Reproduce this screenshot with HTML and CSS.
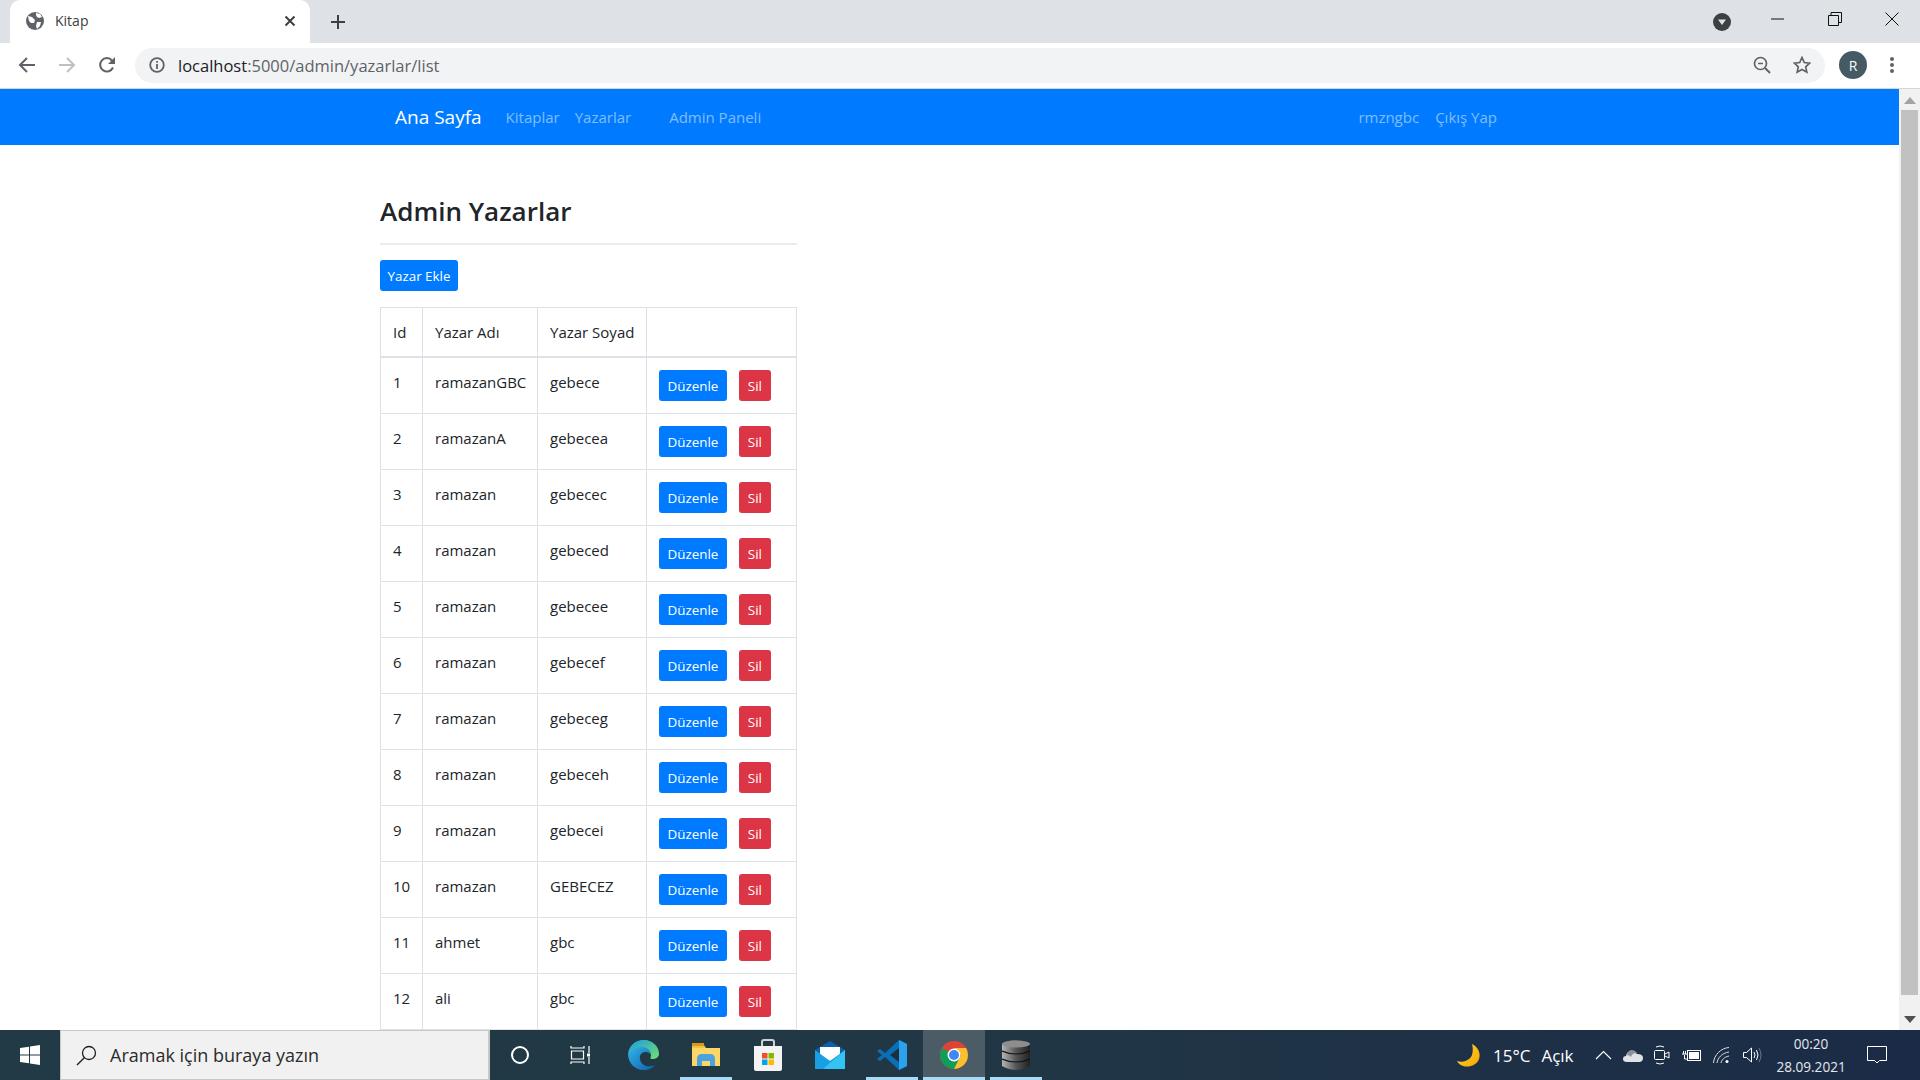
FILE: index.html
```html
<!DOCTYPE html>
<html lang="en">
<head>
  <meta charset="UTF-8">
  <title>Kitap</title>
  <link rel="stylesheet" href="styles.css">
</head>
<body>
  <div class="tabstrip">
    <div class="tab">
      <svg class="tab-favicon" width="18" height="18" viewBox="0 0 18 18"><circle cx="9" cy="9" r="9" fill="#5f6368"/><path d="M2 4l4 1 3 3-1 3-3 0-2-2zM10 1l4 1 2 3-3 1-2-1-1-2zM11 10l4 0-1 4-3 3-1-3z" fill="#fff"/></svg>
      <span class="tab-title">Kitap</span>
      <svg width="12" height="12" viewBox="0 0 12 12"><path d="M1.5 1.5l9 9M10.5 1.5l-9 9" stroke="#3c4043" stroke-width="2"/></svg>
    </div>
    <svg class="new-tab" width="16" height="16" viewBox="0 0 16 16"><path d="M8 1v14M1 8h14" stroke="#3c4043" stroke-width="2"/></svg>
    <svg class="tab-search" width="18" height="18" viewBox="0 0 18 18"><circle cx="9" cy="9" r="9" fill="#3c4043"/><path d="M5 6.5h8L9 12z" fill="#dee1e6"/></svg>
    <div class="window-controls">
      <svg width="14" height="14" viewBox="0 0 14 14"><path d="M0 7h13" stroke="#111" stroke-width="1"/></svg>
      <svg width="14" height="14" viewBox="0 0 14 14"><path d="M.5 3.5h10v10H.5zM3 3.5V.5h10.500v10h-3" fill="none" stroke="#111" stroke-width="1"/></svg>
      <svg width="14" height="14" viewBox="0 0 14 14"><path d="M.5.5l13 13M13.500.5l-13 13" stroke="#111" stroke-width="1"/></svg>
    </div>
  </div>

  <div class="toolbar">
    <svg class="tool" width="18" height="18" viewBox="0 0 18 18"><path d="M17 9H2M9 2L2 9l7 7" fill="none" stroke="#5f6368" stroke-width="2"/></svg>
    <svg class="tool" width="18" height="18" viewBox="0 0 18 18"><path d="M1 9h15M9 2l7 7-7 7" fill="none" stroke="#bdc1c6" stroke-width="2"/></svg>
    <svg class="tool tool-reload" width="18" height="18" viewBox="0 0 18 18"><path d="M15 11.500A6.700 6.700 0 1 1 14 4.500" fill="none" stroke="#5f6368" stroke-width="2"/><path d="M17 1v7h-7z" fill="#5f6368"/></svg>
    <div class="omnibox">
      <svg width="16" height="16" viewBox="0 0 16 16"><circle cx="8" cy="8" r="6.800" fill="none" stroke="#5f6368" stroke-width="1.800"/><path d="M8 7v5M8 4v1.800" stroke="#5f6368" stroke-width="1.800"/></svg>
      <div class="url"><span class="url-host">localhost</span>:5000/admin/yazarlar/list</div>
      <svg width="18" height="18" viewBox="0 0 18 18"><circle cx="7.500" cy="7.500" r="6" fill="none" stroke="#5f6368" stroke-width="1.700"/><path d="M12 12l5 5" stroke="#5f6368" stroke-width="2"/><path d="M5 7.500h5" stroke="#5f6368" stroke-width="1.500"/></svg>
      <svg class="star" width="18" height="18" viewBox="0 0 18 18"><path d="M9 1.500l2.300 5 5.400.6-4 3.700 1.100 5.400L9 13.500l-4.800 2.700 1.100-5.400-4-3.700 5.400-.6z" fill="none" stroke="#5f6368" stroke-width="1.700"/></svg>
    </div>
    <div class="avatar">R</div>
    <svg class="kebab" width="6" height="18" viewBox="0 0 6 18"><circle cx="3" cy="3" r="2" fill="#5f6368"/><circle cx="3" cy="9" r="2" fill="#5f6368"/><circle cx="3" cy="15" r="2" fill="#5f6368"/></svg>
  </div>

  <div class="viewport">
    <div class="page">
      <nav class="navbar">
        <a class="brand">Ana Sayfa</a>
        <a class="nav-link nav-kitaplar">Kitaplar</a>
        <a class="nav-link nav-yazarlar">Yazarlar</a>
        <a class="nav-link nav-admin">Admin Paneli</a>
        <a class="nav-link nav-user">rmzngbc</a>
        <a class="nav-link">Çıkış Yap</a>
      </nav>
      <main class="content">
        <h1>Admin Yazarlar</h1>
        <hr>
        <a class="btn btn-primary btn-add">Yazar Ekle</a>
        <table>
          <thead>
            <tr><th class="col-id">Id</th><th class="col-name">Yazar Adı</th><th class="col-surname">Yazar Soyad</th><th></th></tr>
          </thead>
          <tbody>
            <tr><td>1</td><td>ramazanGBC</td><td>gebece</td><td><a class="btn btn-primary">Düzenle</a><a class="btn btn-danger">Sil</a></td></tr>
            <tr><td>2</td><td>ramazanA</td><td>gebecea</td><td><a class="btn btn-primary">Düzenle</a><a class="btn btn-danger">Sil</a></td></tr>
            <tr><td>3</td><td>ramazan</td><td>gebecec</td><td><a class="btn btn-primary">Düzenle</a><a class="btn btn-danger">Sil</a></td></tr>
            <tr><td>4</td><td>ramazan</td><td>gebeced</td><td><a class="btn btn-primary">Düzenle</a><a class="btn btn-danger">Sil</a></td></tr>
            <tr><td>5</td><td>ramazan</td><td>gebecee</td><td><a class="btn btn-primary">Düzenle</a><a class="btn btn-danger">Sil</a></td></tr>
            <tr><td>6</td><td>ramazan</td><td>gebecef</td><td><a class="btn btn-primary">Düzenle</a><a class="btn btn-danger">Sil</a></td></tr>
            <tr><td>7</td><td>ramazan</td><td>gebeceg</td><td><a class="btn btn-primary">Düzenle</a><a class="btn btn-danger">Sil</a></td></tr>
            <tr><td>8</td><td>ramazan</td><td>gebeceh</td><td><a class="btn btn-primary">Düzenle</a><a class="btn btn-danger">Sil</a></td></tr>
            <tr><td>9</td><td>ramazan</td><td>gebecei</td><td><a class="btn btn-primary">Düzenle</a><a class="btn btn-danger">Sil</a></td></tr>
            <tr><td>10</td><td>ramazan</td><td>GEBECEZ</td><td><a class="btn btn-primary">Düzenle</a><a class="btn btn-danger">Sil</a></td></tr>
            <tr><td>11</td><td>ahmet</td><td>gbc</td><td><a class="btn btn-primary">Düzenle</a><a class="btn btn-danger">Sil</a></td></tr>
            <tr><td>12</td><td>ali</td><td>gbc</td><td><a class="btn btn-primary">Düzenle</a><a class="btn btn-danger">Sil</a></td></tr>
          </tbody>
        </table>
      </main>
    </div>
    <div class="scrollbar">
      <svg width="12" height="7" viewBox="0 0 12 7"><path d="M6 0l6 7H0z" fill="#a3a3a3"/></svg>
      <div class="scroll-thumb"></div>
      <svg width="12" height="7" viewBox="0 0 12 7"><path d="M6 7L0 0h12z" fill="#505050"/></svg>
    </div>
  </div>

  <footer class="taskbar">
    <div class="start">
      <svg width="20" height="20" viewBox="0 0 20 20"><path d="M0 3l9-1.300V9.500H0zM10 1.500L20 0v9.500H10zM0 10.500h9v7.800L0 17zM10 10.500h10V20l-10-1.500z" fill="#fff"/></svg>
    </div>
    <div class="searchbox">
      <svg width="21" height="21" viewBox="0 0 21 21"><circle cx="13" cy="8" r="6.500" fill="none" stroke="#222" stroke-width="1.300"/><path d="M8.500 12.500L1 20" stroke="#222" stroke-width="1.500"/></svg>
      <span>Aramak için buraya yazın</span>
    </div>
    <div class="slot slot-cortana">
      <svg width="20" height="20" viewBox="0 0 20 20"><circle cx="10" cy="10" r="8" fill="none" stroke="#fff" stroke-width="2"/></svg>
    </div>
    <div class="slot slot-taskview">
      <svg width="20" height="20" viewBox="0 0 20 20" fill="none" stroke="#fff" stroke-width="1.200"><path d="M1 1v2h13V1M1 19v-2h13v2M1.500 6h12v8h-12zM19 1v7M19 12v7"/><rect x="17" y="8.500" width="3.500" height="3" fill="#fff" stroke="none"/></svg>
    </div>
    <div class="slot">
      <svg width="32" height="32" viewBox="0 0 32 32">
        <defs>
          <linearGradient id="edgeA" x1="0" y1="0" x2="1" y2="1"><stop offset="0" stop-color="#35c1f1"/><stop offset="1" stop-color="#0c59a4"/></linearGradient>
          <linearGradient id="edgeB" x1="0" y1="0" x2="1" y2="1"><stop offset="0" stop-color="#1b9de2"/><stop offset="1" stop-color="#75e06a"/></linearGradient>
        </defs>
        <path d="M16 1C7 1 1 7 0 15c0 9 7 16 15 16 5 0 9-1 12-5-6 3-14 1-15-6-1-4 2-7 5-7 4 0 6 2 6 4l7 0C31 9 25 1 16 1z" fill="url(#edgeA)"/>
        <path d="M16 1c7 0 15 5 15 14 0 3-3 5-7 5-2 0-2-1-1-3 1-5-4-9-9-9-6 0-10 3-13 6C3 7 9 1 16 1z" fill="url(#edgeB)"/>
      </svg>
    </div>
    <div class="slot is-open">
      <svg width="28" height="24" viewBox="0 0 28 24"><path d="M0 2h12l2 3h14v18H0z" fill="#f0c14b"/><path d="M0 0h12v3H0z" fill="#d89b16"/><path d="M0 5h28v18H0z" fill="#fcd766"/><path d="M5 23v-7q0-5 5-5h8q5 0 5 5v7h-5v-5h-8v5z" fill="#4aa3e0"/></svg>
    </div>
    <div class="slot">
      <svg width="30" height="32" viewBox="0 0 30 32"><path d="M9 8V3q0-2 2-2h8q2 0 2 2v5" fill="none" stroke="#d2d2d2" stroke-width="2"/><path d="M1 7h28v23q0 2-2 2H3q-2 0-2-2z" fill="#f3f3f3"/><rect x="9" y="14" width="5.500" height="5.500" fill="#f25022"/><rect x="15.500" y="14" width="5.500" height="5.500" fill="#7fba00"/><rect x="9" y="20.500" width="5.500" height="5.500" fill="#00a4ef"/><rect x="15.500" y="20.500" width="5.500" height="5.500" fill="#ffb900"/></svg>
    </div>
    <div class="slot">
      <svg width="30" height="28" viewBox="0 0 30 28"><path d="M0 9L15 0l15 9v6H0z" fill="#0a5fb0"/><path d="M5 6h20v10L15 20 5 16z" fill="#fff"/><path d="M0 9l15 11L30 9v19H0z" fill="#1a9fe5"/><path d="M30 9v19H8z" fill="#33c4f3"/></svg>
    </div>
    <div class="slot is-open">
      <svg width="30" height="30" viewBox="0 0 30 30"><path d="M22 0l8 4v22l-8 4L8 17l-5 4-3-2 5-4-5-4 3-2 5 4z" fill="#0b6fb8"/><path d="M22 0l8 4v22l-8 4z" fill="#2aa3ec"/><path d="M22 8v14l-9-7z" fill="#1c2f3b"/></svg>
    </div>
    <div class="slot is-active is-open">
      <svg width="28" height="28" viewBox="0 0 28 28"><circle cx="14" cy="14" r="14" fill="#db4437"/><path d="M14 14L1.900 7A14 14 0 0 0 14 28l7-12z" fill="#0f9d58"/><path d="M14 7h12.100A14 14 0 0 1 14 28l7-14z" fill="#fbc02d"/><circle cx="14" cy="14" r="6.500" fill="#fff"/><circle cx="14" cy="14" r="5" fill="#4285f4"/></svg>
    </div>
    <div class="slot is-open">
      <svg width="28" height="30" viewBox="0 0 28 30"><defs><linearGradient id="dbDisk" x1="0" y1="0" x2="1" y2="0"><stop offset="0" stop-color="#b5b5b5"/><stop offset=".5" stop-color="#555"/><stop offset="1" stop-color="#222"/></linearGradient></defs><path d="M0 4q14-8 28 0v22q-14 8-28 0z" fill="url(#dbDisk)"/><ellipse cx="14" cy="4" rx="14" ry="3.500" fill="#8d8d8d"/><path d="M0 11q14 6 28 0M0 19q14 6 28 0" fill="none" stroke="#111" stroke-width="1.200"/></svg>
    </div>
    <div class="tray">
      <svg class="tray-moon" width="23" height="23" viewBox="0 0 23 23"><defs><linearGradient id="moon" x1="0" y1="0" x2="1" y2="1"><stop offset="0" stop-color="#ffd83a"/><stop offset="1" stop-color="#f7a500"/></linearGradient></defs><path d="M15 0c6 3 9 9 7 15-2 6-10 9-16 7-3-1-5-3-6-5 7 2 13-1 15-6 1-4 1-8 0-11z" fill="url(#moon)"/></svg>
      <span class="weather-temp">15°C</span>
      <span class="weather-text">Açık</span>
      <svg class="tray-chevron" width="17" height="10" viewBox="0 0 17 10"><path d="M1 9l7.500-7.500L16 9" fill="none" stroke="#fff" stroke-width="1.200"/></svg>
      <svg class="tray-icon" width="20" height="13" viewBox="0 0 20 13"><path d="M4 13q-4 0-4-3 0-3 3-3 1-5 6-5 3 0 5 3 6 0 6 4 0 4-4 4z" fill="#dfe3e8"/><path d="M4 6q1-5 5-5 3 0 5 3-5 0-6 4-2-2-4-2z" fill="#8a929b"/></svg>
      <svg class="tray-icon" width="16" height="20" viewBox="0 0 16 20" fill="none" stroke="#fff"><rect x=".5" y="5.500" width="10" height="9" rx="1"/><path d="M11 9l4-2v6l-4-2M2 2q4-2 8 0M2 18q4 2 8 0"/></svg>
      <svg class="tray-icon" width="20" height="13" viewBox="0 0 20 13" fill="none" stroke="#fff"><rect x="5.500" y="1.500" width="13" height="10"/><rect x="7" y="3" width="10" height="7" fill="#fff" stroke="none"/><path d="M0 5h5M1.500 2v3M3.500 2v3M2.500 6v4h3"/></svg>
      <svg class="tray-icon" width="18" height="17" viewBox="0 0 18 17" fill="none" stroke="#ddd"><path d="M.5 16C1 8 8 1 16 .5M4 16c.5-5 5-10 12-11M8 16c.5-3 3-6 8-7"/><circle cx="14" cy="14.500" r="1.500" fill="#fff" stroke="none"/></svg>
      <svg class="tray-icon" width="20" height="16" viewBox="0 0 20 16" fill="none" stroke="#fff"><path d="M.5 5.500h3l5-4.500v14l-5-4.500h-3z"/><path d="M11 5q2 3 0 6M13.500 3q3 5 0 10"/><path d="M16 1q4 7 0 14" stroke="#777"/></svg>
      <div class="clock">
        <div>00:20</div>
        <div>28.09.2021</div>
      </div>
      <svg class="notif" width="20" height="20" viewBox="0 0 20 20"><path d="M.5 1.500h19v14h-7l-2.500 2.500L7.500 15.500h-7z" fill="none" stroke="#fff"/></svg>
    </div>
  </footer>
</body>
</html>
```

FILE: styles.css
```css
* {
  box-sizing: border-box;
}
html, body {
  height: 100%;
}
body {
  margin: 0;
  display: flex;
  flex-direction: column;
  overflow: hidden;
  font-family: "Open Sans", "Noto Sans", sans-serif;
  color: #212529;
  background: #fff;
}

/* browser chrome */
.tabstrip {
  height: 43px;
  flex: none;
  display: flex;
  align-items: center;
  padding-left: 10px;
  background: #dee1e6;
}
.tab {
  width: 300px;
  height: 43px;
  display: flex;
  align-items: center;
  padding: 0 14px 2px 16px;
  background: #fff;
  border-radius: 10px 10px 0 0;
}
.tab-favicon {
  margin-right: 11px;
}
.tab-title {
  flex: 1;
  font-size: 14px;
  color: #3c4043;
}
.new-tab {
  margin-left: 20px;
}
.tab-search {
  margin-left: 1367px;
}
.window-controls {
  display: flex;
  gap: 43px;
  margin-left: 40px;
  margin-top: -6px;
}
.toolbar {
  height: 46px;
  flex: none;
  display: flex;
  align-items: center;
  padding: 0 0 1px 18px;
  background: #fff;
  border-bottom: 1px solid #d6d6d6;
}
.tool {
  margin-right: 22px;
}
.tool-reload {
  margin-right: 14px;
}
.omnibox {
  width: 1690px;
  height: 35px;
  margin-left: 5px;
  display: flex;
  align-items: center;
  padding: 0 14px 0 14px;
  background: #f1f3f4;
  border-radius: 18px;
}
.url {
  flex: 1;
  margin-left: 13px;
  font-size: 16.500px;
  color: #5f6368;
}
.url-host {
  color: #202124;
}
.star {
  margin-left: 22px;
}
.avatar {
  width: 28px;
  height: 28px;
  margin-left: 14px;
  display: flex;
  align-items: center;
  justify-content: center;
  font-size: 14px;
  color: #fff;
  background: #455a64;
  border-radius: 50%;
}
.kebab {
  margin-left: 22px;
}

/* page */
.viewport {
  flex: 1;
  display: flex;
  min-height: 0;
}
.page {
  flex: 1;
  min-width: 0;
  overflow: hidden;
}
.navbar {
  height: 56px;
  display: flex;
  align-items: center;
  padding: 0 402px 0 395px;
  background: #007bff;
}
.brand {
  margin-right: 24px;
  font-size: 19px;
  color: #fff;
}
.nav-link {
  font-size: 15px;
  color: rgba(255, 255, 255, .5);
}
.nav-kitaplar {
  margin-right: 15px;
}
.nav-yazarlar {
  margin-right: 38px;
}
.nav-admin {
  margin-right: auto;
}
.nav-user {
  margin-right: 16px;
}
.content {
  width: 417px;
  margin-left: 380px;
}
h1 {
  margin: 0;
  padding-top: 47px;
  font-size: 26px;
  font-weight: 600;
  line-height: 38px;
}
hr {
  height: 2px;
  margin: 13px 0 15px;
  border: 0;
  background: #e9ecef;
}
.btn {
  display: inline-block;
  height: 31px;
  padding: 5px 8.500px 3px;
  font-size: 13.400px;
  line-height: 23px;
  color: #fff;
  border-radius: 3px;
}
.btn-primary {
  background: #007bff;
}
.btn-danger {
  margin-left: 12px;
  padding: 5px 9px 3px;
  background: #dc3545;
}
.btn-add {
  display: block;
  width: 78px;
  margin-bottom: 16px;
  padding: 5px 0 3px;
  text-align: center;
  white-space: nowrap;
}
table {
  width: 417px;
  table-layout: fixed;
  border-collapse: collapse;
  font-size: 15px;
}
th, td {
  padding: 12px;
  line-height: 24px;
  text-align: left;
  vertical-align: top;
  font-weight: 400;
  white-space: nowrap;
  border: 1px solid #dee2e6;
}
th {
  border-bottom-width: 2px;
}
td {
  height: 56px;
}
.col-id {
  width: 42px;
}
.col-name {
  width: 115px;
}
.col-surname {
  width: 109px;
}
.scrollbar {
  width: 21px;
  flex: none;
  display: flex;
  flex-direction: column;
  align-items: center;
  padding: 8px 0 7px;
  background: #f1f1f1;
}
.scroll-thumb {
  width: 17px;
  height: 885px;
  margin: 6px 0 auto;
  background: #c1c1c1;
}

/* windows taskbar */
.taskbar {
  height: 50px;
  flex: none;
  display: flex;
  align-items: center;
  background: linear-gradient(90deg, #213a45 0%, #213745 50%, #1b2b47 100%);
}
.start {
  width: 60px;
  display: flex;
  justify-content: center;
}
.searchbox {
  width: 430px;
  height: 50px;
  display: flex;
  align-items: center;
  gap: 13px;
  padding-left: 15px;
  font-size: 18px;
  color: #2b2b2b;
  background: #f1f1f1;
  border: 1px solid #c8c8c8;
  border-right-width: 2px;
}
.slot {
  position: relative;
  width: 62px;
  height: 50px;
  flex: none;
  display: flex;
  align-items: center;
  justify-content: center;
}
.slot-cortana {
  width: 60px;
}
.slot-taskview {
  width: 60px;
  margin-right: 3px;
}
.is-active {
  background: #4b5c66;
}
.is-open::after {
  content: "";
  position: absolute;
  left: 5px;
  right: 5px;
  bottom: 0;
  height: 3px;
  background: #a6dcf7;
}
.is-active.is-open::after {
  left: 0;
  right: 0;
}
.tray {
  flex: 1;
  height: 50px;
  display: flex;
  align-items: center;
  padding-left: 410px;
  color: #fff;
  white-space: nowrap;
}
.weather-temp, .weather-text {
  font-size: 17px;
}
.weather-temp {
  margin-left: 13px;
}
.weather-text {
  margin-left: 11px;
}
.tray-chevron {
  margin: 0 11px 0 21px;
}
.tray-icon {
  margin-right: 11.500px;
}
.clock {
  width: 80px;
  margin-left: -3px;
  font-size: 13.600px;
  line-height: 23px;
  text-align: center;
  color: #e4e8ec;
}
.notif {
  margin-left: 16px;
}
```
